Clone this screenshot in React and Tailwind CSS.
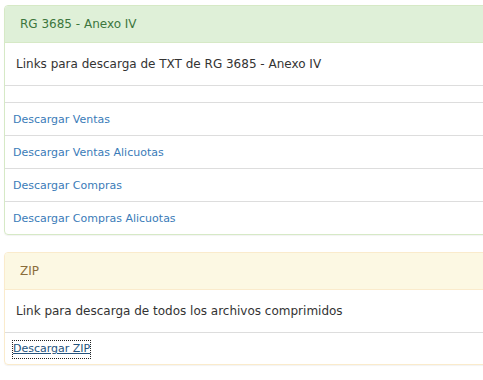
import React from 'react';

const files = [
  'Descargar Ventas',
  'Descargar Ventas Alicuotas',
  'Descargar Compras',
  'Descargar Compras Alicuotas',
];

export default function App() {
  return (
    <div className="w-[483px] h-[380px] overflow-hidden bg-white pt-[5px] pl-[4px] font-['DejaVu_Sans',Verdana,sans-serif]">
      <div className="w-[500px]">
        {/* RG 3685 panel */}
        <div className="border border-[#d6e9c6] rounded-[4px] shadow-[0_1px_1px_rgba(0,0,0,0.05)] mb-[17px]">
          <div className="bg-[#dff0d8] text-[#3c763d] text-[12px] h-[37px] flex items-center pl-[15px] border-b border-[#d6e9c6] rounded-t-[3px]">
            RG 3685 - Anexo IV
          </div>
          <div className="h-[42px] flex items-center pl-[11px] text-[12px] text-[#333]">
            Links para descarga de TXT de RG 3685 - Anexo IV
          </div>
          <div className="border-t border-[#ddd] h-[17px]" />
          {files.map((f) => (
            <div key={f} className="border-t border-[#ddd] h-[33px] flex items-center pl-[8px] pt-[2px] text-[11px]">
              <a href="#" className="text-[#3a7bb8]">{f}</a>
            </div>
          ))}
        </div>

        {/* ZIP panel */}
        <div className="border border-[#faebcc] rounded-[4px] shadow-[0_1px_1px_rgba(0,0,0,0.05)]">
          <div className="bg-[#fcf8e3] text-[#8a6d3b] text-[12px] h-[37px] flex items-center pl-[15px] border-b border-[#faebcc] rounded-t-[3px]">
            ZIP
          </div>
          <div className="h-[42px] flex items-center pl-[11px] text-[12px] text-[#333]">
            Link para descarga de todos los archivos comprimidos
          </div>
          <div className="border-t border-[#ddd] h-[32px] flex items-center pl-[8px] pt-[2px] text-[11px]">
            <a href="#" className="text-[#23527c] underline outline-1 outline-dotted outline-[#222]">Descargar ZIP</a>
          </div>
        </div>
      </div>
    </div>
  );
}
